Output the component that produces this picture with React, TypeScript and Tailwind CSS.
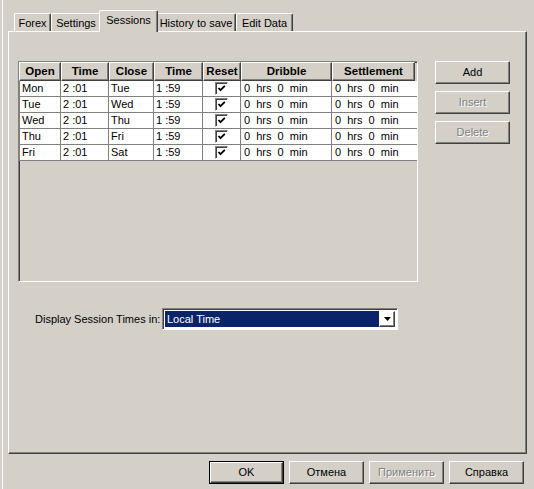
import React from 'react';

const raised =
  'border-t border-l border-white border-r border-b border-r-[#404040] border-b-[#404040] shadow-[inset_-1px_-1px_#808080]';
const sunken =
  'border-t border-l border-[#808080] border-r border-b border-r-white border-b-white shadow-[inset_1px_1px_#404040]';

const columns = [
  { label: 'Open', w: 'w-[42px]' },
  { label: 'Time', w: 'w-[48px]' },
  { label: 'Close', w: 'w-[45px]' },
  { label: 'Time', w: 'w-[49px]' },
  { label: 'Reset', w: 'w-[38px]' },
  { label: 'Dribble', w: 'w-[91px]' },
  { label: 'Settlement', w: 'w-[83px]' },
];

const sessions = [
  ['Mon', '2 :01', 'Tue', '1 :59'],
  ['Tue', '2 :01', 'Wed', '1 :59'],
  ['Wed', '2 :01', 'Thu', '1 :59'],
  ['Thu', '2 :01', 'Fri', '1 :59'],
  ['Fri', '2 :01', 'Sat', '1 :59'],
];

const tabs = [
  { label: 'Forex', w: 'w-[37px]' },
  { label: 'Settings', w: 'w-[50px]' },
  { label: 'Sessions', w: 'w-[59px]', active: true },
  { label: 'History to save', w: 'w-[80px]' },
  { label: 'Edit Data', w: 'w-[57px]' },
];

function Checkbox() {
  return (
    <div className={`w-[13px] h-[13px] bg-white ${sunken} flex items-center justify-center`}>
      <svg width="9" height="9" viewBox="0 0 9 9">
        <path d="M1.5 4 L3.5 6.2 L7.8 1.8" fill="none" stroke="#000" strokeWidth="1.8" />
      </svg>
    </div>
  );
}

function Button({ label, disabled, isDefault, className = '' }: { label: string; disabled?: boolean; isDefault?: boolean; className?: string }) {
  const inner = (
    <div
      className={`h-full w-full flex items-center justify-center ${raised} ${
        disabled ? 'text-[#808080] [text-shadow:1px_1px_0_#fff]' : 'text-black'
      }`}
    >
      {label}
    </div>
  );
  if (isDefault) {
    return <div className={`border border-black ${className}`}>{inner}</div>;
  }
  return <div className={className}>{inner}</div>;
}

export default function App() {
  return (
    <div className="w-[534px] h-[489px] bg-[#d4d0c8] font-['Liberation_Sans',Arial,sans-serif] text-[11px] leading-none text-black overflow-hidden">
      <div className="ml-[2px] h-full border-l border-white pl-[5px] pr-[7px] pt-[10px]">
        {/* Tab strip */}
        <div className="h-[21px] flex items-end pl-[6px]">
          {tabs.map((t) =>
            t.active ? (
              <div
                key={t.label}
                className={`${t.w} h-[22px] -mx-[2px] -mb-[1px] relative z-10 bg-[#d4d0c8] border-t border-l border-white border-r border-r-[#404040] shadow-[inset_-1px_0_#808080] rounded-t-[2px] flex items-start justify-center pt-[4px]`}
              >
                {t.label}
              </div>
            ) : (
              <div
                key={t.label}
                className={`${t.w} h-[18px] border-t border-l border-white border-r border-r-[#404040] shadow-[inset_-1px_0_#808080] rounded-t-[2px] flex items-start justify-center pt-[4px]`}
              >
                {t.label}
              </div>
            )
          )}
        </div>

        {/* Tab panel */}
        <div className={`h-[423px] ${raised} pl-[9px] pt-[29px]`}>
          <div className="flex items-start gap-[17px]">
            {/* Grid */}
            <div className={`w-[400px] h-[221px] ${sunken} bg-[#d4d0c8]`}>
              <div className="flex h-[19px]">
                {columns.map((c, i) => (
                  <div
                    key={i}
                    className={`${c.w} h-full ${raised} flex items-center justify-center font-bold text-[11.5px]`}
                  >
                    {c.label}
                  </div>
                ))}
              </div>
              {sessions.map((row, r) => (
                <div key={r} className="flex h-[16px] bg-white border-b border-[#808080]">
                  {row.map((cell, i) => (
                    <div
                      key={i}
                      className={`${columns[i].w} h-full border-r border-[#808080] flex items-center pl-[2px] ${i === 0 ? 'border-l border-l-[#808080] pl-[1px]' : ''}`}
                    >
                      {cell}
                    </div>
                  ))}
                  <div className={`${columns[4].w} h-full border-r border-[#808080] flex items-center justify-center`}>
                    <Checkbox />
                  </div>
                  <div className={`${columns[5].w} h-full border-r border-[#808080] flex items-center pl-[3px] whitespace-pre`}>
                    {'0  hrs  0  min'}
                  </div>
                  <div className={`${columns[6].w} h-full flex items-center pl-[3px] whitespace-pre`}>
                    {'0  hrs  0  min'}
                  </div>
                </div>
              ))}
            </div>

            {/* Side buttons */}
            <div className="flex flex-col gap-[7px]">
              <Button label="Add" className="w-[75px] h-[23px]" />
              <Button label="Insert" disabled className="w-[75px] h-[23px]" />
              <Button label="Delete" disabled className="w-[75px] h-[23px]" />
            </div>
          </div>

          {/* Display session times */}
          <div className="mt-[26px] ml-[17px] flex items-center">
            <span className="w-[127px] whitespace-nowrap">Display Session Times in:</span>
            <div className={`w-[236px] h-[22px] bg-white ${sunken} flex p-[2px]`}>
              <div className="flex-1 bg-[#0a246a] text-white flex items-center pl-[2px]">Local Time</div>
              <div className={`w-[16px] h-full ${raised} flex items-center justify-center`}>
                <svg width="7" height="4" viewBox="0 0 7 4">
                  <path d="M0 0 H7 L3.5 4 Z" fill="#000" />
                </svg>
              </div>
            </div>
          </div>
        </div>

        {/* Dialog buttons */}
        <div className="mt-[7px] flex justify-end gap-[5px] pr-[3px]">
          <Button label="OK" isDefault className="w-[75px] h-[23px]" />
          <Button label="Отмена" className="w-[75px] h-[23px]" />
          <Button label="Применить" disabled className="w-[75px] h-[23px]" />
          <Button label="Справка" className="w-[75px] h-[23px]" />
        </div>
      </div>
    </div>
  );
}
